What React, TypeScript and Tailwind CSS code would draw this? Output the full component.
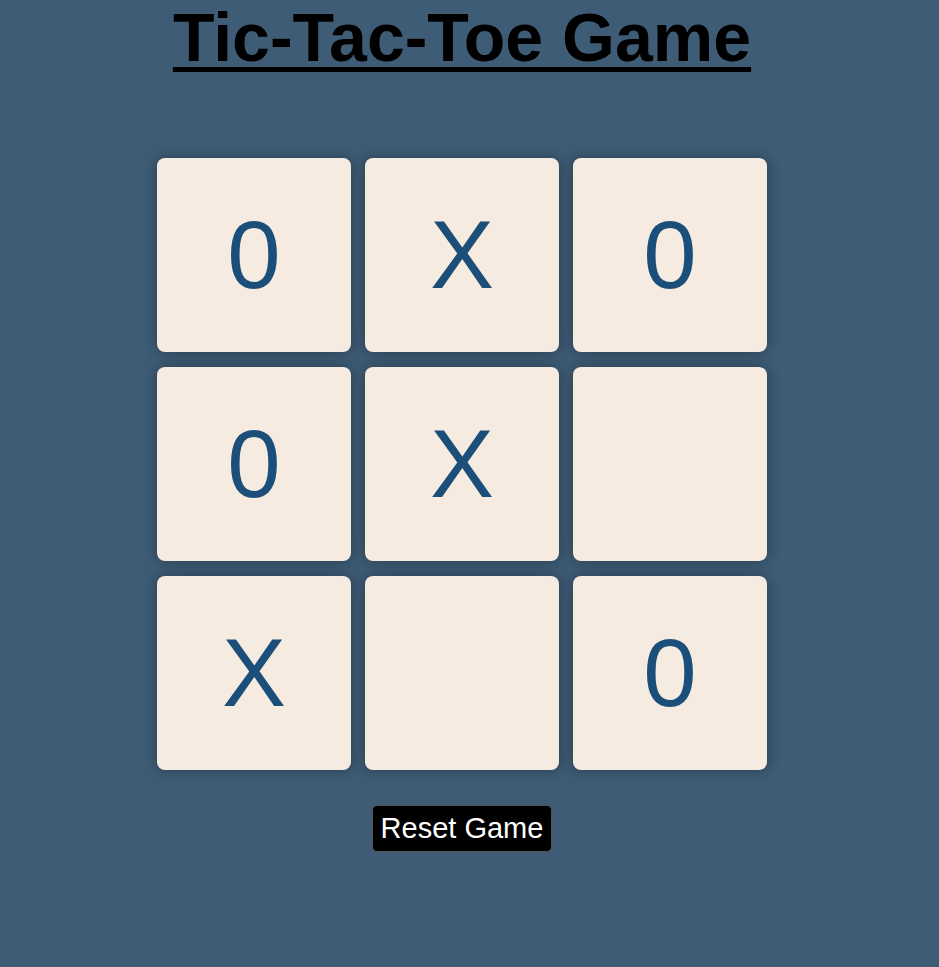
import React from "react";

const board = ["0", "X", "0", "0", "X", "", "X", "", "0"];

const App: React.FC = () => {
  return (
    <div className="min-h-[967px] bg-[#3e5c76] font-['Liberation_Sans',Arial,sans-serif]">
      <div className="w-[924px] flex flex-col items-center">
        <h1 className="text-[68px] leading-[74px] font-bold underline decoration-[5px] underline-offset-[6px] text-black">
          Tic-Tac-Toe Game
        </h1>

        <div className="mt-[84px] grid grid-cols-[repeat(3,194px)] auto-rows-[194px] gap-x-[14px] gap-y-[15px]">
          {board.map((v, i) => (
            <div
              key={i}
              className="bg-[#f5ebe0] rounded-lg shadow-[0_0_14px_rgba(0,0,0,0.35)] flex items-center justify-center text-[96px] text-[#1b4f7a] leading-none"
            >
              {v}
            </div>
          ))}
        </div>

        <button className="mt-[35px] bg-black text-white text-[29px] leading-[33px] px-2 py-[6px] rounded-[5px] border border-[#555]">
          Reset Game
        </button>
      </div>
    </div>
  );
};

export default App;
